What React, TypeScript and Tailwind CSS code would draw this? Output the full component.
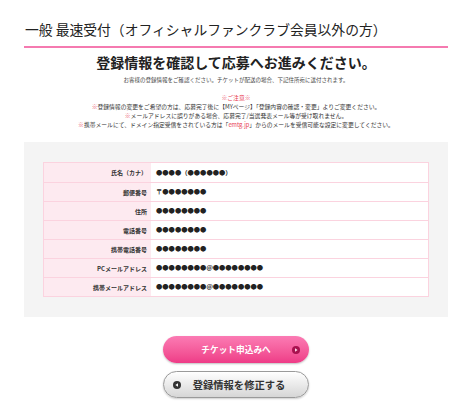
import React from 'react';

const rows: { label: string; value: string }[] = [
  { label: '氏名（カナ）', value: '●●●●（●●●●●●）' },
  { label: '郵便番号', value: '〒●●●●●●●' },
  { label: '住所', value: '●●●●●●●●' },
  { label: '電話番号', value: '●●●●●●●●' },
  { label: '携帯電話番号', value: '●●●●●●●●' },
  { label: 'PCメールアドレス', value: '●●●●●●●●@●●●●●●●●' },
  { label: '携帯メールアドレス', value: '●●●●●●●●@●●●●●●●●' },
];

const App: React.FC = () => {
  return (
    <div className="w-[472px] h-[415px] bg-white text-[#222] font-['Noto_Sans_CJK_JP','Noto_Sans',sans-serif] overflow-hidden">
      <div className="px-[24px]">
        {/* Page title */}
        <h2 className="pt-[20px] pl-[1px] text-[13.8px] leading-[18px] text-[#222]">
          一般 最速受付（オフィシャルファンクラブ会員以外の方）
        </h2>
        <div className="mt-[8px] h-[2px] bg-[#f57ab0]" />

        {/* Lead */}
        <h1 className="mt-[6px] text-center text-[14px] leading-[16px] font-bold text-[#222]">
          登録情報を確認して応募へお進みください。
        </h1>
        <p className="mt-[6px] text-center text-[5.5px] leading-[8px] text-[#444]">
          お客様の登録情報をご確認ください。チケットが配送の場合、下記住所宛に送付されます。
        </p>

        {/* Notes */}
        <div className="mt-[9px] text-center text-[5.8px] leading-[9px] text-[#333]">
          <p className="text-[#e8384f]">※ご注意※</p>
          <p>
            <span className="text-[#e8384f]">※</span>登録情報の変更をご希望の方は、応募完了後に【MYページ】「登録内容の確認・変更」よりご変更ください。
          </p>
          <p>
            <span className="text-[#e8384f]">※</span>メールアドレスに誤りがある場合、応募完了/当選発表メール等が受け取れません。
          </p>
          <p>
            <span className="text-[#e8384f]">※</span>携帯メールにて、ドメイン指定受信をされている方は「<span className="text-[#e8384f]">emtg.jp</span>」からのメールを受信可能な設定に変更してください。
          </p>
        </div>

        {/* Registration info */}
        <div className="mt-[13px] bg-[#f4f4f4] px-[19px] pt-[20px] pb-[20px]">
          <div className="border border-[#fbd3df] bg-white">
            {rows.map((row, i) => (
              <div
                key={row.label}
                className={`flex h-[19px] ${i > 0 ? 'border-t border-[#fbd3df]' : ''}`}
              >
                <div className="w-[107px] shrink-0 bg-[#fdeaf0] pr-[4px] flex items-center justify-end text-[6px] font-bold text-[#333]">
                  {row.label}
                </div>
                <div className="flex-1 pl-[5px] flex items-center text-[6.3px] font-bold text-[#222]">
                  {row.value}
                </div>
              </div>
            ))}
          </div>
        </div>

        {/* Actions */}
        <div className="mt-[19px] flex flex-col items-center gap-[8px]">
          <button className="relative w-[146px] h-[27px] rounded-full bg-gradient-to-b from-[#fb7bb4] to-[#ee3b87] shadow-[0_1px_2px_rgba(0,0,0,0.25)] flex items-center justify-center text-white text-[8.7px] font-bold">
            チケット申込みへ
            <svg className="absolute right-[9px] top-1/2 -translate-y-1/2" width="8" height="8" viewBox="0 0 8 8">
              <circle cx="4" cy="4" r="4" fill="#a8124f" />
              <path d="M3 2.2 L5.6 4 L3 5.8 Z" fill="#ffd6e6" />
            </svg>
          </button>
          <button className="relative w-[146px] h-[27px] rounded-full border border-[#9a9a9a] bg-gradient-to-b from-white to-[#d6d6d6] shadow-[0_1px_2px_rgba(0,0,0,0.2)] flex items-center justify-center pl-[6px] text-[#333] text-[10.3px] font-bold">
            <svg className="absolute left-[9px] top-1/2 -translate-y-1/2" width="8" height="8" viewBox="0 0 8 8">
              <circle cx="4" cy="4" r="4" fill="#333" />
              <path d="M5 2.2 L2.4 4 L5 5.8 Z" fill="#fff" />
            </svg>
            登録情報を修正する
          </button>
        </div>
      </div>
    </div>
  );
};

export default App;
